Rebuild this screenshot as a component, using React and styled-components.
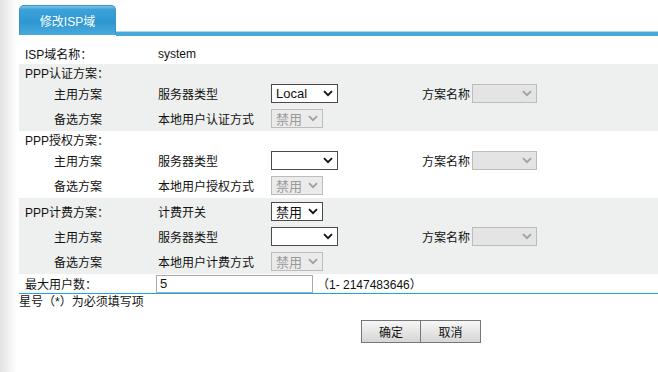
import React from 'react';
import styled, { createGlobalStyle } from 'styled-components';

const GlobalStyle = createGlobalStyle`
  html, body {
    margin: 0;
    padding: 0;
    background: #fff;
  }
  body {
    font-family: "Liberation Sans", Arial, "Noto Sans CJK SC", sans-serif;
    font-size: 12px;
    color: #111;
  }
`;

const Page = styled.div`
  display: flex;
  width: 658px;
  height: 372px;
  overflow: hidden;
`;

const Side = styled.div`
  width: 17px;
  flex-shrink: 0;
  background: linear-gradient(to right, #e2e2e2, #f4f4f4 60%, #fff);
`;

const Main = styled.div`
  flex: 1;
  padding-left: 2px;
  display: flex;
  flex-direction: column;
`;

const TabBar = styled.div`
  display: flex;
  align-items: flex-end;
  height: 36px;
`;

const Tab = styled.div`
  width: 97px;
  height: 30px;
  margin-bottom: 1px;
  box-sizing: border-box;
  border: 1px solid #3b93c6;
  border-bottom: none;
  border-radius: 5px 5px 0 0;
  background: linear-gradient(to bottom, #7cc6ec 0%, #3ea2d9 12%, #2d97d1 55%, #4aaadd 100%);
  color: #fff;
  font-size: 12px;
  display: flex;
  align-items: center;
  justify-content: center;
  padding-bottom: 1px;
`;

const TabLine = styled.div`
  flex: 1;
  height: 5px;
  box-sizing: border-box;
  border-top: 1px solid #a8d7ef;
  background: #47a8dc;
`;

const Form = styled.div`
  padding-top: 7px;
  display: flex;
  flex-direction: column;
`;

const Section = styled.div`
  background: ${p => (p.$shade ? '#eef0ef' : 'transparent')};
`;

const Row = styled.div`
  display: grid;
  grid-template-columns: 139px 113px 151px 50px auto;
  align-items: center;
  height: ${p => p.$h}px;
`;

const Label = styled.div`
  padding-left: ${p => (p.$indent ? 35 : 6)}px;
  white-space: nowrap;
`;

const Cell = styled.div`
  white-space: nowrap;
  display: flex;
  align-items: center;
`;

const Select = styled.div`
  box-sizing: border-box;
  width: ${p => p.$w}px;
  height: 19px;
  border: 1px solid ${p => (p.$disabled ? '#bcbcbc' : '#4a4a4a')};
  background: ${p => (p.$disabled ? (p.$dark ? '#e4e4e4' : '#ebebeb') : '#fff')};
  color: ${p => (p.$disabled ? '#9a9a9a' : '#111')};
  font-size: 13px;
  display: flex;
  align-items: center;
  justify-content: space-between;
  padding: 0 4px 0 4px;
`;

const Chevron = ({ color }) => (
  <svg width="10" height="7" viewBox="0 0 10 7">
    <path d="M1 1.2 L5 5.2 L9 1.2" fill="none" stroke={color} strokeWidth="1.8" />
  </svg>
);

const Drop = ({ w, value, disabled, dark }) => (
  <Select $w={w} $disabled={disabled} $dark={dark}>
    <span>{value}</span>
    <Chevron color={disabled ? '#a0a0a0' : '#111'} />
  </Select>
);

const TextInput = styled.div`
  box-sizing: border-box;
  width: 157px;
  height: 18px;
  border: 1px solid #a9a9a9;
  background: #fff;
  font-size: 13px;
  padding-left: 3px;
  display: flex;
  align-items: center;
  margin-left: -2px;
`;

const Range = styled.span`
  margin-left: 4px;
  font-size: 12px;
`;

const Divider = styled.div`
  border-top: 1px solid #1ea3e8;
`;

const Note = styled.div`
  line-height: 16px;
  font-size: 12px;
`;

const Buttons = styled.div`
  display: flex;
  padding-left: 342px;
  margin-top: 10px;
`;

const Button = styled.button`
  width: 60px;
  height: 23px;
  box-sizing: border-box;
  border: 1px solid #777;
  border-width: 1px 1px 1px ${p => (p.$first ? 1 : 0)}px;
  background: linear-gradient(to bottom, #f7f7f7, #e4e4e4 55%, #d6d6d6);
  font-family: "Liberation Sans", Arial, "Noto Sans CJK SC", sans-serif;
  font-size: 12px;
  color: #111;
  padding: 0;
`;

const Scheme = ({ title, titleH, titleRight, local }) => (
  <>
    <Row $h={titleH}>
      <Label>{title}</Label>
      {titleRight}
    </Row>
    <Row $h={25}>
      <Label $indent>主用方案</Label>
      <Cell>服务器类型</Cell>
      <Cell>
        <Drop w={67} value={local ? 'Local' : ''} />
      </Cell>
      <Cell>方案名称</Cell>
      <Cell>
        <Drop w={65} value="" disabled dark />
      </Cell>
    </Row>
    <Row $h={25}>
      <Label $indent>备选方案</Label>
      <Cell>{`本地用户${title.slice(3, 5)}方式`}</Cell>
      <Cell>
        <Drop w={52} value="禁用" disabled />
      </Cell>
    </Row>
  </>
);

export default function App() {
  return (
    <Page>
      <GlobalStyle />
      <Side />
      <Main>
        <TabBar>
          <Tab>修改ISP域</Tab>
          <TabLine />
        </TabBar>
        <Form>
          <Row $h={21}>
            <Label>ISP域名称：</Label>
            <Cell>system</Cell>
          </Row>
          <Section $shade>
            <Scheme title="PPP认证方案：" titleH={17} local />
          </Section>
          <Section>
            <Scheme title="PPP授权方案：" titleH={17} />
          </Section>
          <Section $shade>
            <Scheme
              title="PPP计费方案："
              titleH={26}
              titleRight={
                <>
                  <Cell>计费开关</Cell>
                  <Cell>
                    <Drop w={52} value="禁用" />
                  </Cell>
                </>
              }
            />
          </Section>
          <Row $h={19}>
            <Label>最大用户数：</Label>
            <Cell style={{ gridColumn: '2 / 6' }}>
              <TextInput>5</TextInput>
              <Range>（1- 2147483646）</Range>
            </Cell>
          </Row>
          <Divider />
          <Note>星号（*）为必须填写项</Note>
          <Buttons>
            <Button $first>确定</Button>
            <Button>取消</Button>
          </Buttons>
        </Form>
      </Main>
    </Page>
  );
}
